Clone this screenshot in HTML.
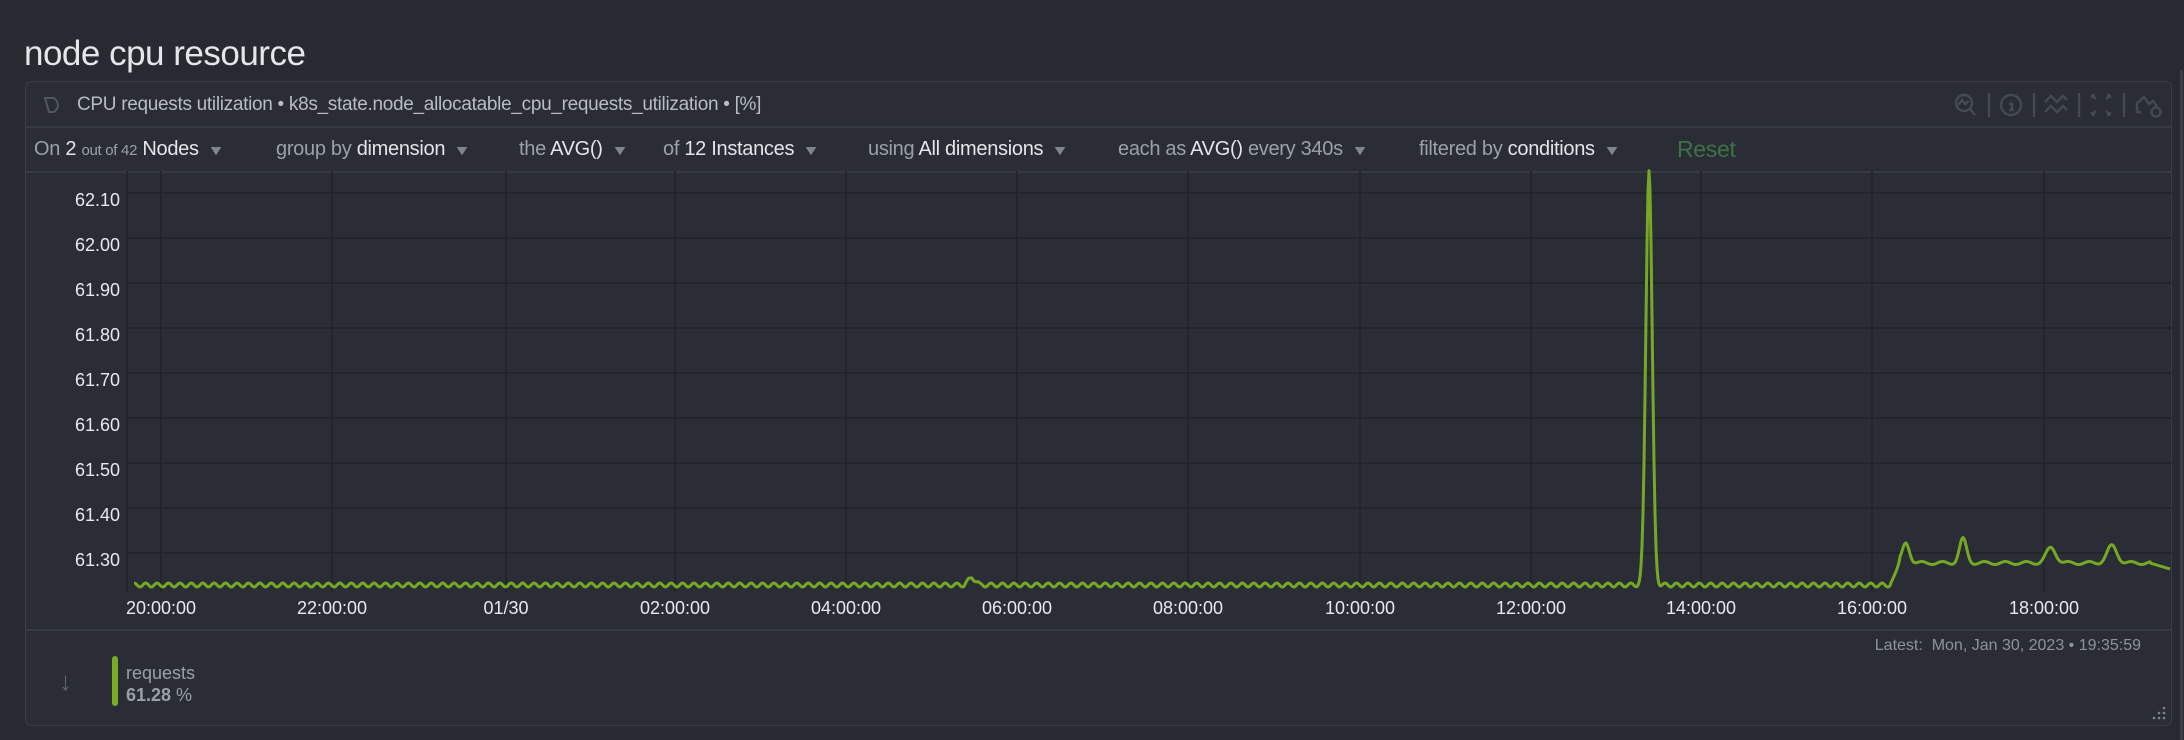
<!DOCTYPE html>
<html><head><meta charset="utf-8"><style>
html,body{margin:0;padding:0;background:#272a31;width:2184px;height:740px;overflow:hidden;font-family:"Liberation Sans",sans-serif;}
.title{position:absolute;left:24px;top:34px;font-size:35px;color:#e4e6e9;letter-spacing:-0.5px;}
.panel{position:absolute;left:25px;top:81px;width:2147px;height:645px;border:1px solid #383c45;border-radius:6px;background:#2a2d35;box-sizing:border-box;}
.hdr{position:absolute;left:0;top:0;right:0;height:44px;border-bottom:2px solid #363a43;}
.hdr .t{position:absolute;left:51px;top:12px;font-size:19px;color:#b8bcc3;letter-spacing:-0.3px;}
.ctl{position:absolute;left:0;top:46px;right:0;height:43px;border-bottom:2px solid #363a43;font-size:20px;color:#9ba1a9;white-space:nowrap;}
.ctl span.v{color:#e3e5e8}
.ctl .c{position:absolute;top:10px;letter-spacing:-0.3px}
.chev{display:inline-block;color:#7c8590;font-size:14px;margin-left:10px;transform:scaleX(1.3);}
</style></head><body>
<div class="title">node cpu resource</div>
<div class="panel">
 <div class="hdr">
  <svg style="position:absolute;left:17px;top:13px" width="22" height="20" viewBox="0 0 22 20"><path d="M2 3 L11 3 Q19 10 11 17 L6 17 Z" fill="none" stroke="#50565f" stroke-width="2"/></svg>
  <div class="t">CPU requests utilization • k8s_state.node_allocatable_cpu_requests_utilization • [%]</div>
  <svg style="position:absolute;left:1925px;top:10px" width="222" height="26" viewBox="0 0 222 26" fill="none" stroke="#444a52" stroke-width="2.4">
   <circle cx="13" cy="11" r="8"/><path d="M7 13 L11 8 L14 12 L18 9 M19 17 L24 23"/>
   <line x1="38" y1="1" x2="38" y2="25"/>
   <circle cx="60" cy="13" r="10"/><path d="M60 9 v0.5 M58 12 h3 v6 M58 18 h5"/>
   <line x1="83" y1="1" x2="83" y2="25"/>
   <path d="M94 10 L100 4 L106 10 L112 4 L116 8 M94 20 L100 14 L106 20 L112 14 L116 18"/>
   <line x1="128" y1="1" x2="128" y2="25"/>
   <path d="M141 3 L145 7 M141 3 h3 M141 3 v3 M159 3 L155 7 M159 3 h-3 M159 3 v3 M141 23 L145 19 M141 23 h3 M141 23 v-3 M159 23 L155 19 M159 23 h-3 M159 23 v-3"/>
   <line x1="173" y1="1" x2="173" y2="25"/>
   <path d="M190 20 L186 20 L186 11 L193 5 L198 12 L202 9 L206 14"/><circle cx="205" cy="20" r="4.5"/>
  </svg>
 </div>
 <div class="ctl">
  <div class="c" style="left:8px">On <span class="v">2</span> <span style="font-size:15px">out of 42</span> <span class="v">Nodes</span><span class="chev">▼</span></div>
  <div class="c" style="left:250px">group by <span class="v">dimension</span><span class="chev">▼</span></div>
  <div class="c" style="left:493px">the <span class="v">AVG()</span><span class="chev">▼</span></div>
  <div class="c" style="left:637px">of <span class="v">12 Instances</span><span class="chev">▼</span></div>
  <div class="c" style="left:842px">using <span class="v">All dimensions</span><span class="chev">▼</span></div>
  <div class="c" style="left:1092px">each as <span class="v">AVG()</span> every 340s<span class="chev">▼</span></div>
  <div class="c" style="left:1393px">filtered by <span class="v">conditions</span><span class="chev">▼</span></div>
  <div class="c" style="left:1651px;color:#3d7344;font-size:23px;top:8px">Reset</div>
 </div>
 <div style="position:absolute;left:0;right:0;top:547px;height:2px;background:#363a43"></div>
 <div style="position:absolute;right:30px;top:555px;font-size:16px;color:#8d939b">Latest:&nbsp; Mon, Jan 30, 2023 • 19:35:59</div>
 <div style="position:absolute;left:33px;top:584px;font-size:26px;color:#5d646d">↓</div>
 <div style="position:absolute;left:86px;top:574px;width:6px;height:50px;border-radius:3px;background:#7aab24"></div>
 <div style="position:absolute;left:100px;top:581px;font-size:18px;color:#9aa0a8">requests</div>
 <div style="position:absolute;left:100px;top:603px;font-size:18px;color:#9aa0a8"><b>61.28</b> %</div>
 <svg style="position:absolute;right:4px;bottom:4px" width="16" height="16"><g fill="#7d848c"><circle cx="13" cy="3" r="1.3"/><circle cx="13" cy="8" r="1.3"/><circle cx="8" cy="8" r="1.3"/><circle cx="13" cy="13" r="1.3"/><circle cx="8" cy="13" r="1.3"/><circle cx="3" cy="13" r="1.3"/></g></svg>
</div>
<div style="position:absolute;left:2180px;top:70px;width:3px;height:670px;background:#3a3e46"></div>
<svg id="ch" style="position:absolute;left:0;top:0" width="2184" height="740"></svg>
<script>
var s='';
var gc='#212329';
for(var i=0;i<9;i++){var y=193+i*45;s+='<line x1="127" y1="'+y+'" x2="2172" y2="'+y+'" stroke="'+gc+'" stroke-width="1.5"/>';}
var xs=[161,332,506,675,846,1017,1188,1360,1531,1701,1872,2044];
s+='<line x1="127" y1="171" x2="127" y2="593" stroke="'+gc+'" stroke-width="1.5"/>';
xs.forEach(function(x){s+='<line x1="'+x+'" y1="171" x2="'+x+'" y2="593" stroke="'+gc+'" stroke-width="1.5"/>';});
function base(x){return 585+2*Math.sin(x*0.55);}
var pts=[];
for(var x=134;x<=2170;x+=1){
 var y=base(x);
 if(x>=1900){y=563+1.5*Math.sin(x*0.3);}
 else if(x>1890){y=585-(x-1890)/10*22;}
 if(x>2150){y=563+(x-2150)/20*6;}
 if(Math.abs(x-972)<8){y-=8*(1-Math.abs(x-972)/8);}
 y-=416*Math.exp(-Math.pow((x-1649)/4.5,2));
 [[1906,20,5],[1963,24,5],[2051,15,7],[2112,17,7]].forEach(function(b){y-=b[1]*Math.exp(-Math.pow((x-b[0])/b[2],2));});
 pts.push(x+','+y.toFixed(1));
}
s+='<polyline points="'+pts.join(' ')+'" fill="none" stroke="#76a825" stroke-width="3" stroke-linejoin="round"/>';
var yl=['62.10','62.00','61.90','61.80','61.70','61.60','61.50','61.40','61.30'];
yl.forEach(function(t,i){s+='<text x="120" y="'+(206+i*45)+'" text-anchor="end" fill="#e7e9ec" font-size="18" font-family="Liberation Sans">'+t+'</text>';});
var xl=['20:00:00','22:00:00','01/30','02:00:00','04:00:00','06:00:00','08:00:00','10:00:00','12:00:00','14:00:00','16:00:00','18:00:00'];
xl.forEach(function(t,i){s+='<text x="'+xs[i]+'" y="614" text-anchor="middle" fill="#e7e9ec" font-size="18" font-family="Liberation Sans">'+t+'</text>';});
document.getElementById('ch').innerHTML=s;
</script>
</body></html>
